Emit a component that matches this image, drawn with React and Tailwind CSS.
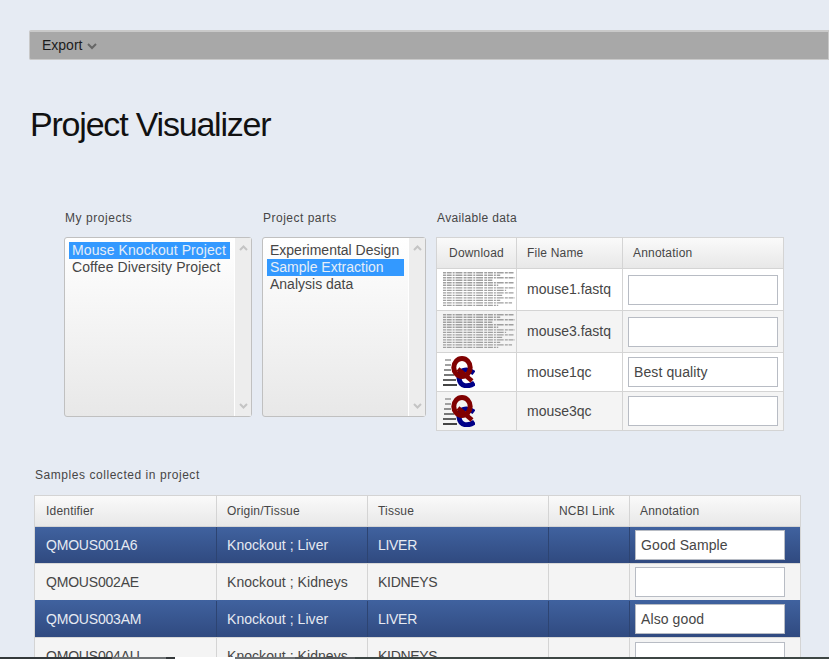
const fileRows = [
  { icon: 'text', name: 'mouse1.fastq', note: '', h: 'h-[42px]' },
  { icon: 'text', name: 'mouse3.fastq', note: '', h: 'h-[42px]', alt: true },
  { icon: 'qc', name: 'mouse1qc', note: 'Best quality', h: 'h-[39px]' },
  { icon: 'qc', name: 'mouse3qc', note: '', h: 'h-[38px]', alt: true },
];

const sampleRows = [
  { id: 'QMOUS001A6', origin: 'Knockout ; Liver', tissue: 'LIVER', note: 'Good Sample', selected: true, h: 'h-[37px]' },
  { id: 'QMOUS002AE', origin: 'Knockout ; Kidneys', tissue: 'KIDNEYS', note: '', h: 'h-[36px]' },
  { id: 'QMOUS003AM', origin: 'Knockout ; Liver', tissue: 'LIVER', note: 'Also good', selected: true, h: 'h-[38px] pt-[1px]' },
  { id: 'QMOUS004AU', origin: 'Knockout ; Kidneys', tissue: 'KIDNEYS', note: '', h: 'h-[37px]' },
];

function FastqThumb() {
  // tiny text dump thumbnail, rows of grey noise
  const widths = [72, 58, 73, 50, 72, 56, 73, 64, 72, 60, 73, 58, 70, 56];
  return (
    <svg width="74" height="37" viewBox="0 0 74 37" className="blur-[0.4px]">
      {widths.map((w, i) => (
        <line key={i} x1="0" x2={w} y1={1.5 + i * 2.55} y2={1.5 + i * 2.55} stroke="#a0a0a0" strokeWidth="1.4" strokeDasharray="3 0.8 5 1 2 0.9 7 1.2" />
      ))}
    </svg>
  );
}

function QcLogo() {
  return (
    <svg width="32" height="32" viewBox="0 0 32 32">
      <g strokeWidth="2">
        <line x1="2" x2="8" y1="4" y2="4" stroke="#b0b0b0" />
        <line x1="2" x2="8" y1="9" y2="9" stroke="#a0a0a0" />
        <line x1="1" x2="8" y1="14" y2="14" stroke="#909090" />
        <line x1="1" x2="11" y1="19" y2="19" stroke="#777" />
        <line x1="0" x2="13" y1="24" y2="24" stroke="#606060" />
        <line x1="0" x2="14" y1="29" y2="29" stroke="#444" />
      </g>
      <path d="M31 17 C23 11 15 15 16 22 C17 31 25 31.5 31.5 27" fill="none" stroke="#000088" strokeWidth="5" />
      <ellipse cx="19" cy="11.5" rx="8.2" ry="9" fill="none" stroke="#800000" strokeWidth="5" />
      <path d="M15 13 L29 25" stroke="#800000" strokeWidth="4.5" />
    </svg>
  );
}

function Chevron({ dir }) {
  return (
    <svg width="9" height="6" viewBox="0 0 9 6">
      <path d={dir === 'up' ? 'M1 5 L4.5 1.5 L8 5' : 'M1 1 L4.5 4.5 L8 1'} fill="none" stroke="currentColor" strokeWidth="2" />
    </svg>
  );
}

function ListBox({ items, selected, className }) {
  return (
    <div className={`flex h-[180px] rounded-[3px] border border-[#c0c0c0] bg-gradient-to-b from-white to-[#e8e8e8] ${className}`}>
      <div className="flex-1 px-[4px] pt-[4px] text-[14px] leading-[17px] text-[#464646]">
        {items.map((item, i) => (
          <div key={item} className={i === selected ? 'bg-[#3399ff] pl-[3px] text-[#e6eef8]' : 'pl-[3px]'}>
            {item}
          </div>
        ))}
      </div>
      <div className="flex w-[17px] flex-col items-center justify-between border-l border-white bg-[#ededed] py-[7px] text-[#c4c4c4]">
        <Chevron dir="up" />
        <Chevron dir="down" />
      </div>
    </div>
  );
}

function AnnotationInput({ value }) {
  return (
    <div className="flex h-[30px] w-full items-center border border-[#b8bcc4] bg-white px-[5px] text-[14px] tracking-[0.1px] text-[#464646]">
      {value}
    </div>
  );
}

function SectionLabel({ children, className }) {
  return <div className={`h-[26px] pl-[1px] text-[12px] leading-[14px] text-[#464646] ${className}`}>{children}</div>;
}

const headCell = 'border-r border-[#d4d4d4] text-[12px] text-[#464646] tracking-[0.2px]';

// the sliver of the desktop taskbar caught at the bottom of the screenshot
const taskbar = [
  { w: 'w-[112px]', bg: 'bg-[#33383a]' },
  { w: 'w-[54px]', bg: 'bg-[#6e7274]' },
  { w: 'w-[9px]', bg: 'bg-[#33383a]' },
  { w: 'w-[60px]', bg: 'bg-white' },
  { w: 'w-[60px]', bg: 'bg-[#6e7274]' },
  { w: 'w-[60px]', bg: 'bg-[#55595b]' },
  { w: 'flex-1', bg: 'bg-[#3d4644]' },
];

export default function App() {
  return (
    <div className="relative h-[659px] overflow-hidden bg-[#e6ebf3] pt-[30px] font-['Liberation_Sans',Arial,sans-serif]">
      <div className="ml-[29px] flex h-[30px] items-center rounded-l-[2px] border border-t-2 border-[#c9c9c9] bg-[#a8a8a8] pl-[12px] text-[14px] text-[#1c1c1c]">
        Export
        <svg width="10" height="7" viewBox="0 0 10 7" className="ml-[5px] mt-[2px]">
          <path d="M1 1 L5 5 L9 1" fill="none" stroke="#666" strokeWidth="2" />
        </svg>
      </div>

      <h1 className="ml-[30px] mt-[44px] text-[34px] leading-[41px] tracking-[-1.2px] text-[#111111]">Project Visualizer</h1>

      <div className="ml-[64px] mt-[64px] flex">
        <div className="w-[188px] pt-[2px]">
          <SectionLabel className="tracking-[0.55px]">My projects</SectionLabel>
          <ListBox items={['Mouse Knockout Project', 'Coffee Diversity Project']} selected={0} className="w-[188px] tracking-[0.1px]" />
        </div>
        <div className="ml-[10px] w-[164px] pt-[2px]">
          <SectionLabel className="tracking-[0.5px]">Project parts</SectionLabel>
          <ListBox items={['Experimental Design', 'Sample Extraction', 'Analysis data']} selected={1} className="w-[164px]" />
        </div>
        <div className="ml-[10px] w-[348px] pt-[2px]">
          <SectionLabel className="tracking-[0.35px]">Available data</SectionLabel>
          <div className="border border-[#d4d4d4]">
            <div className="flex h-[31px] items-center border-b border-[#d4d4d4] bg-gradient-to-b from-[#fafafa] to-[#e8e8e8]">
              <div className={`${headCell} flex h-full w-[80px] items-center justify-center`}>Download</div>
              <div className={`${headCell} flex h-full w-[106px] items-center pl-[10px]`}>File Name</div>
              <div className="pl-[10px] text-[12px] tracking-[0.2px] text-[#464646]">Annotation</div>
            </div>
            {fileRows.map((row) => (
              <div key={row.name} className={`flex ${row.h} items-center border-b border-[#d4d4d4] last:border-b-0 ${row.alt ? 'bg-[#f4f4f4]' : 'bg-white'}`}>
                <div className="flex h-full w-[80px] items-center overflow-hidden border-r border-[#d4d4d4] pl-[6px]">
                  {row.icon === 'text' ? <FastqThumb /> : <QcLogo />}
                </div>
                <div className="flex h-full w-[106px] items-center border-r border-[#d4d4d4] pl-[10px] text-[14px] text-[#464646]">{row.name}</div>
                <div className="flex-1 px-[5px]">
                  <AnnotationInput value={row.note} />
                </div>
              </div>
            ))}
          </div>
        </div>
      </div>

      <div className="ml-[35px] mt-[37px] h-[27px] text-[12px] leading-[14px] tracking-[0.55px] text-[#464646]">Samples collected in project</div>
      <div className="ml-[34px] w-[767px] border border-[#d4d4d4]">
        <div className="flex h-[31px] border-b border-[#d4d4d4] bg-gradient-to-b from-[#fafafa] to-[#e8e8e8]">
          <div className={`${headCell} flex w-[182px] items-center pl-[11px]`}>Identifier</div>
          <div className={`${headCell} flex w-[151px] items-center pl-[10px]`}>Origin/Tissue</div>
          <div className={`${headCell} flex w-[181px] items-center pl-[10px]`}>Tissue</div>
          <div className={`${headCell} flex w-[81px] items-center pl-[10px]`}>NCBI Link</div>
          <div className="flex items-center pl-[10px] text-[12px] tracking-[0.2px] text-[#464646]">Annotation</div>
        </div>
        {sampleRows.map((row) => {
          const cell = row.selected ? 'border-r border-[#2d4472]' : 'border-r border-[#d4d4d4]';
          return (
            <div key={row.id} className={`flex ${row.h} text-[14px] ${row.selected ? 'border-b border-b-[#d8d8d8] bg-[#304a80] bg-gradient-to-b from-[#40629f] to-[#304a80] text-[#e6eaf2]' : 'bg-[#f4f4f4] text-[#464646]'}`}>
              <div className={`${cell} flex w-[182px] items-center pl-[11px] tracking-[-0.2px]`}>{row.id}</div>
              <div className={`${cell} flex w-[151px] items-center pl-[10px] tracking-[0.05px]`}>{row.origin}</div>
              <div className={`${cell} flex w-[181px] items-center pl-[10px] tracking-[-0.3px]`}>{row.tissue}</div>
              <div className={`${cell} w-[81px]`} />
              <div className="flex flex-1 items-center pl-[5px] pr-[15px]">
                <AnnotationInput value={row.note} />
              </div>
            </div>
          );
        })}
      </div>

      <div className="absolute inset-x-0 bottom-0 flex h-[2px]">
        {taskbar.map((seg, i) => (
          <div key={i} className={`${seg.w} ${seg.bg}`} />
        ))}
      </div>
    </div>
  );
}
